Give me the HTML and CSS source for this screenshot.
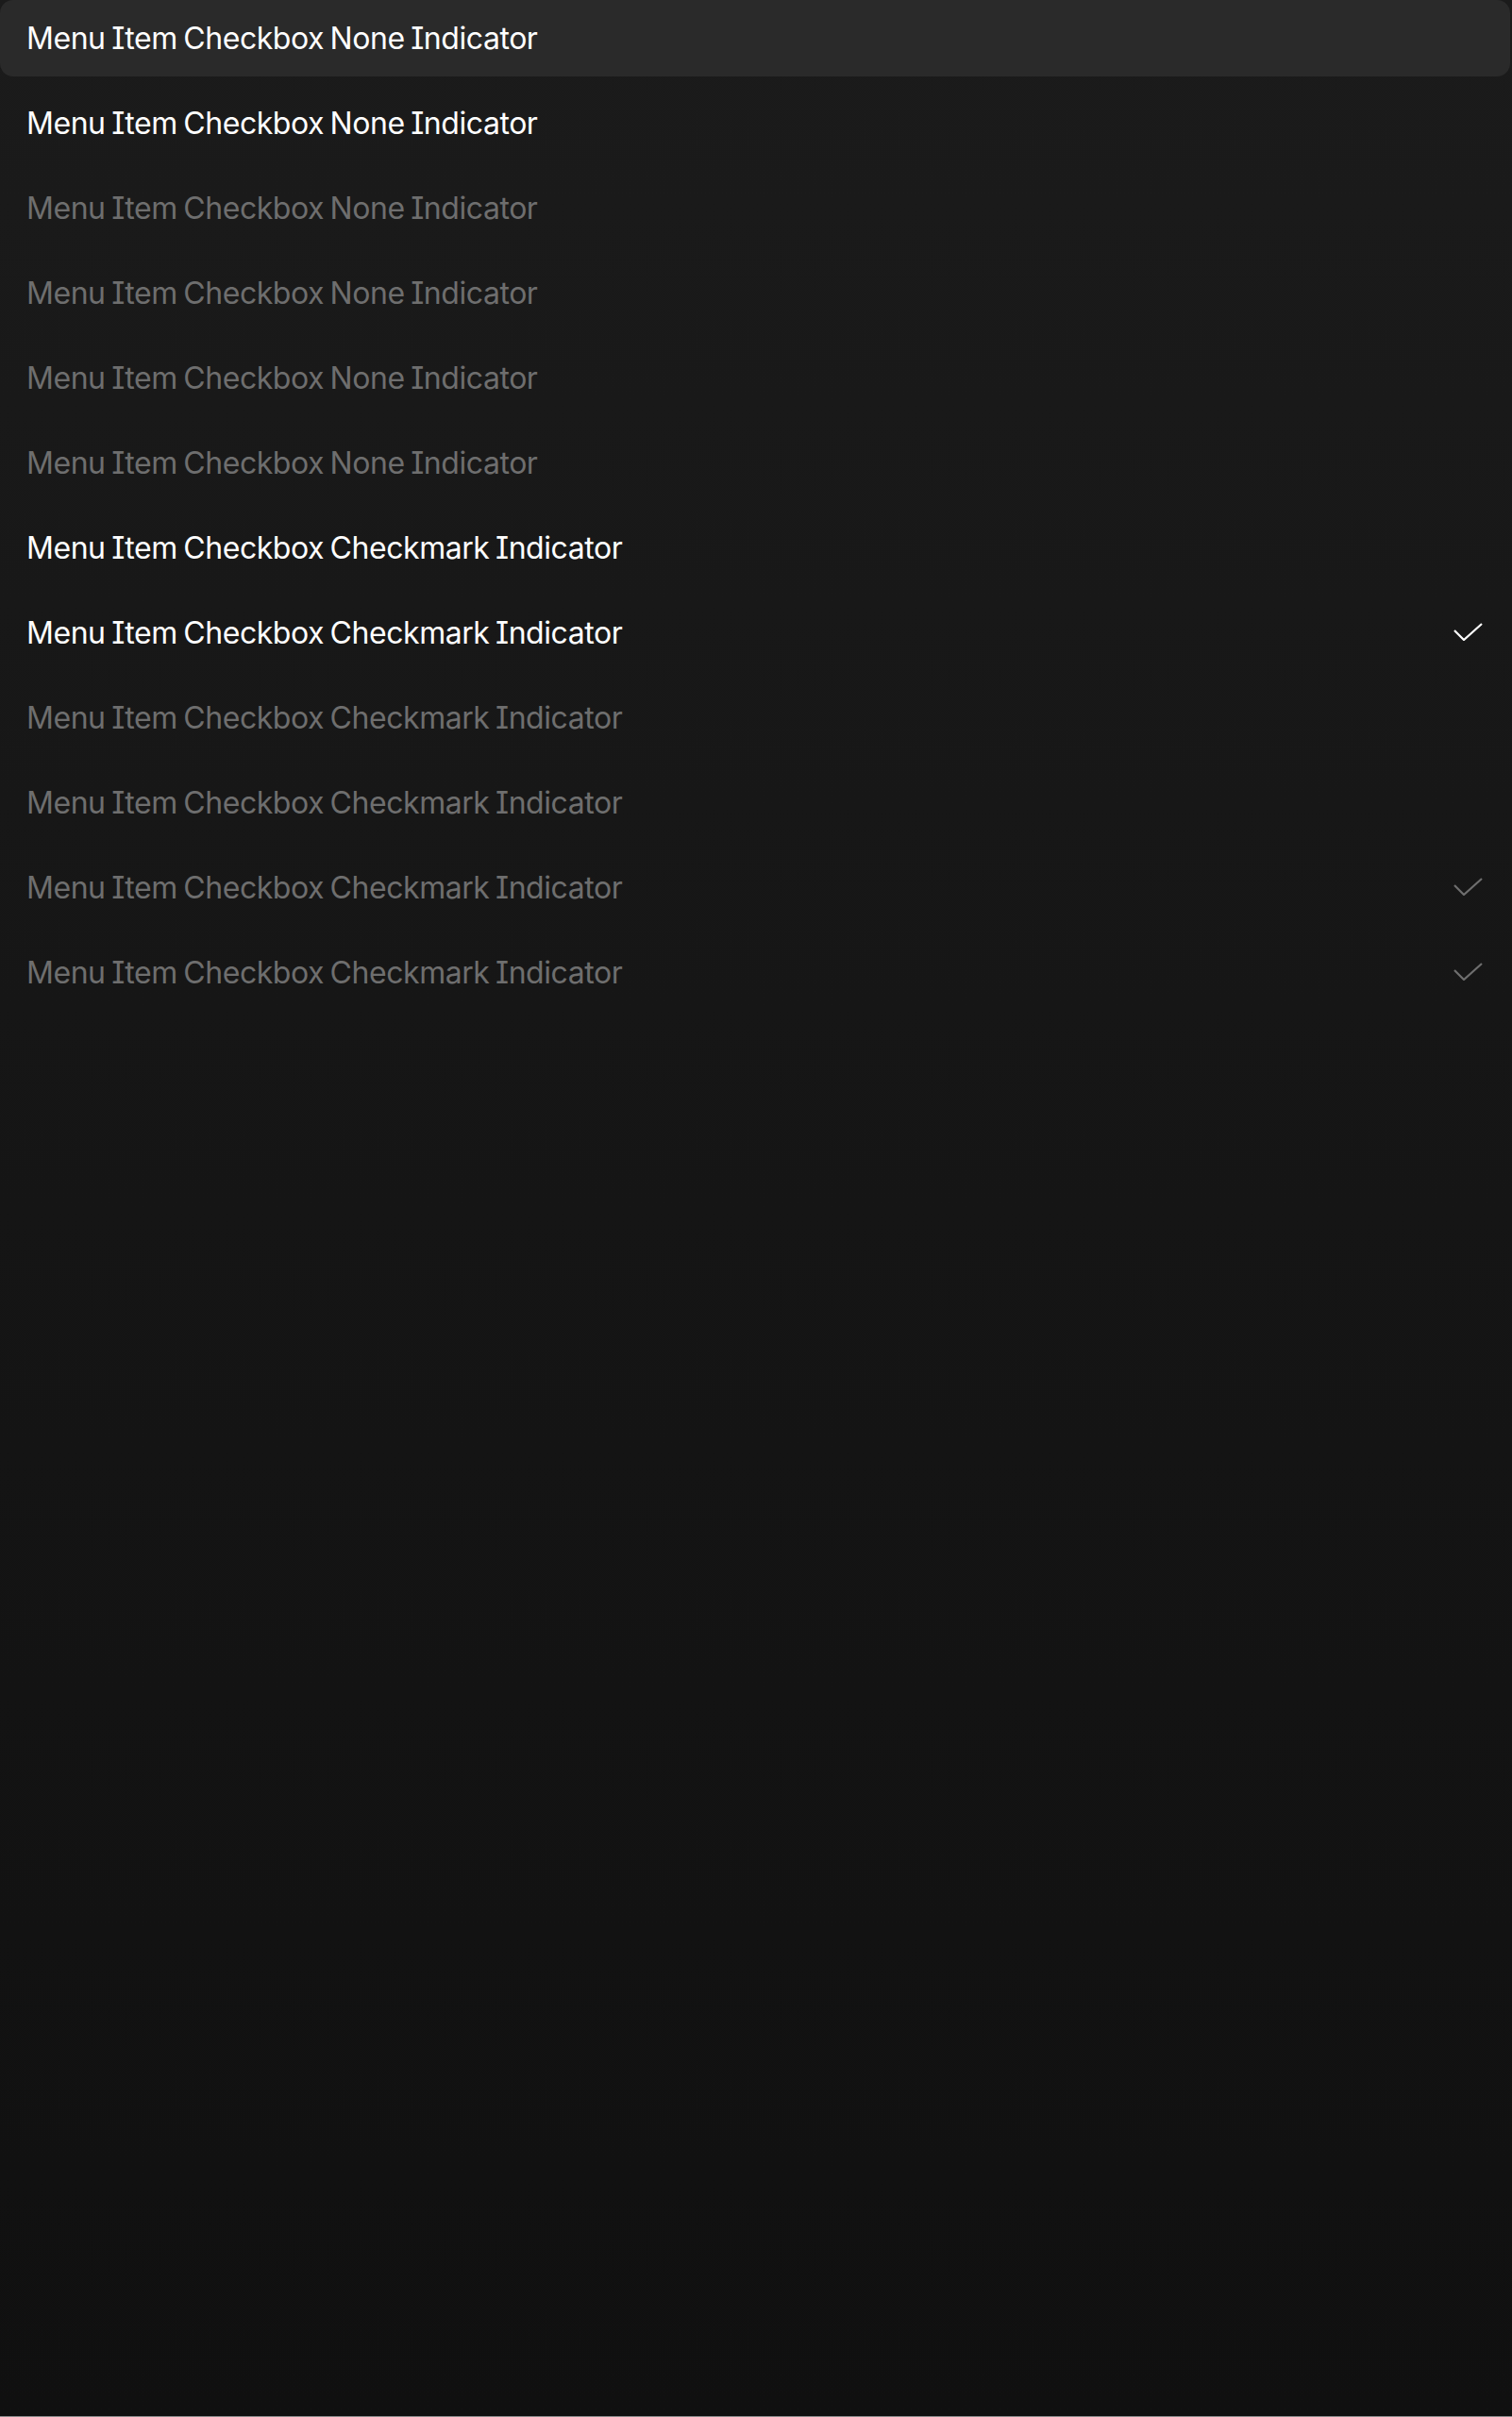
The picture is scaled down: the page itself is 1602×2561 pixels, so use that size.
FILE: index.html
```html
<!DOCTYPE html>
<html>
<head>
<meta charset="utf-8">
<link rel="stylesheet" href="styles.css">
</head>
<body>
<div class="page">
  <div class="menu">
    <div class="item highlighted"><span class="label">Menu Item Checkbox None Indicator</span></div>
    <div class="item"><span class="label">Menu Item Checkbox None Indicator</span></div>
    <div class="item disabled"><span class="label">Menu Item Checkbox None Indicator</span></div>
    <div class="item disabled"><span class="label">Menu Item Checkbox None Indicator</span></div>
    <div class="item disabled"><span class="label">Menu Item Checkbox None Indicator</span></div>
    <div class="item disabled"><span class="label">Menu Item Checkbox None Indicator</span></div>
    <div class="item"><span class="label">Menu Item Checkbox Checkmark Indicator</span></div>
    <div class="item"><span class="label">Menu Item Checkbox Checkmark Indicator</span>
      <svg class="check" width="31" height="19" viewBox="0 0 31 19"><polyline points="1,8 11,18 30,1" fill="none" stroke="currentColor" stroke-width="2.2"/></svg></div>
    <div class="item disabled"><span class="label">Menu Item Checkbox Checkmark Indicator</span></div>
    <div class="item disabled"><span class="label">Menu Item Checkbox Checkmark Indicator</span></div>
    <div class="item disabled"><span class="label">Menu Item Checkbox Checkmark Indicator</span>
      <svg class="check" width="31" height="19" viewBox="0 0 31 19"><polyline points="1,8 11,18 30,1" fill="none" stroke="currentColor" stroke-width="2.2"/></svg></div>
    <div class="item disabled"><span class="label">Menu Item Checkbox Checkmark Indicator</span>
      <svg class="check" width="31" height="19" viewBox="0 0 31 19"><polyline points="1,8 11,18 30,1" fill="none" stroke="currentColor" stroke-width="2.2"/></svg></div>
  </div>
  <div class="bottom-line"></div>
</div>
</body>
</html>
```
FILE: styles.css
```css
html, body {
  margin: 0;
  padding: 0;
}
body {
  background: #101010;
  font-family: Inter, "Noto Sans", sans-serif;
}
.page {
  height: 2561px;
  display: flex;
  flex-direction: column;
  background: linear-gradient(to bottom, #1b1b1b 0%, #151515 50%, #101010 100%);
}
.menu {
  flex: 1;
  display: flex;
  flex-direction: column;
  gap: 9px;
}
.item {
  height: 81px;
  box-sizing: border-box;
  padding: 0 29px 0 28px;
  display: flex;
  align-items: center;
  justify-content: space-between;
  color: #ffffff;
  border-radius: 14px;
  margin-right: 2px;
}
.item.highlighted {
  background: #2a2a2a;
}
.item.disabled {
  color: #6e6e6e;
}
.label {
  font-size: 32px;
  line-height: 1;
  letter-spacing: -0.45px;
  word-spacing: -2px;
  font-feature-settings: "cv08" 1;
  white-space: nowrap;
}
.check {
  display: block;
  margin-top: -2px;
}
.bottom-line {
  height: 1px;
  background: #8a8a8a;
}
```
